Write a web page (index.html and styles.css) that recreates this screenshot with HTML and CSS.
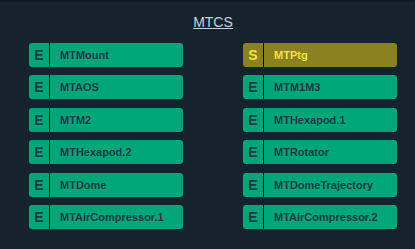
FILE: index.html
```html
<!DOCTYPE html>
<html lang="en">
<head>
    <meta charset="UTF-8">
    <title>MTCS</title>
    <link rel="stylesheet" href="styles.css">
</head>
<body>

<div class="top-strip"></div>

<div class="panel">
    <h2 class="panel-title"><a href="#">MTCS</a></h2>

    <div class="csc-grid">
        <div class="csc"><span class="csc-state">E</span><span class="csc-name">MTMount</span></div>
        <div class="csc standby"><span class="csc-state">S</span><span class="csc-name">MTPtg</span></div>
        <div class="csc"><span class="csc-state">E</span><span class="csc-name">MTAOS</span></div>
        <div class="csc"><span class="csc-state">E</span><span class="csc-name">MTM1M3</span></div>
        <div class="csc"><span class="csc-state">E</span><span class="csc-name">MTM2</span></div>
        <div class="csc"><span class="csc-state">E</span><span class="csc-name">MTHexapod.1</span></div>
        <div class="csc"><span class="csc-state">E</span><span class="csc-name">MTHexapod.2</span></div>
        <div class="csc"><span class="csc-state">E</span><span class="csc-name">MTRotator</span></div>
        <div class="csc"><span class="csc-state">E</span><span class="csc-name">MTDome</span></div>
        <div class="csc"><span class="csc-state">E</span><span class="csc-name">MTDomeTrajectory</span></div>
        <div class="csc"><span class="csc-state">E</span><span class="csc-name">MTAirCompressor.1</span></div>
        <div class="csc"><span class="csc-state">E</span><span class="csc-name">MTAirCompressor.2</span></div>
    </div>
</div>

</body>
</html>
```

FILE: styles.css
```css
body {
    margin: 0;
    background-color: #15232c;
    font-family: 'Liberation Sans', Arial, sans-serif;
    height: 249px;
    overflow: hidden;
}
.top-strip {
    height: 2px;
    background-color: #111d25;
}
.panel {
    padding: 0 0 0 29px;
}
.panel-title {
    margin: 0;
    padding-top: 12px;
    height: 41px;
    box-sizing: border-box;
    width: 368px;
    text-align: center;
    font-size: 14px;
    font-weight: normal;
    line-height: 16px;
}
.panel-title a {
    color: #c9d3da;
    text-decoration: underline;
}
.csc-grid {
    display: grid;
    grid-template-columns: 154px 154px;
    column-gap: 60px;
    row-gap: 8.4px;
}
.csc {
    display: flex;
    height: 24px;
    background-color: #00a677;
    border-radius: 3px;
    color: #1e3a45;
    font-weight: bold;
    overflow: hidden;
}
.csc-state {
    width: 20px;
    border-right: 1px solid #000;
    text-align: center;
    font-size: 14px;
    line-height: 24px;
}
.csc-name {
    padding-left: 10px;
    font-size: 11px;
    line-height: 24px;
}
.standby {
    background-color: #8a8121;
    color: #f3e43a;
}
```
